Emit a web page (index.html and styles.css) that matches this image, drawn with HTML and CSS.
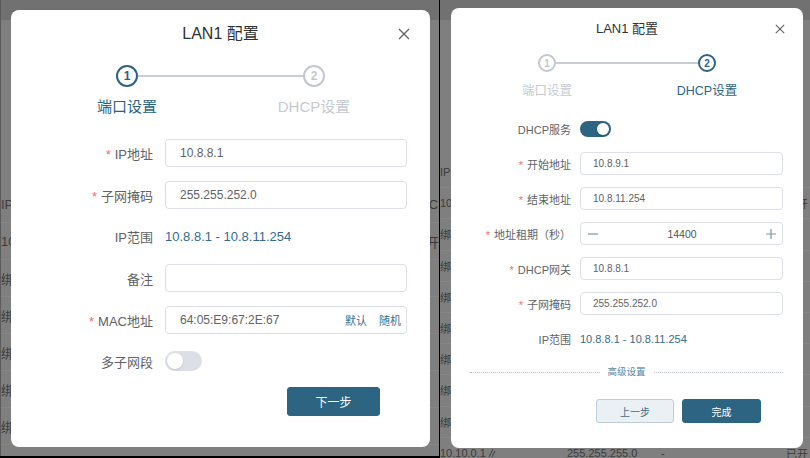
FILE: index.html
```html
<!DOCTYPE html>
<html lang="zh-CN">
<head>
<meta charset="utf-8">
<title>LAN1 配置</title>
<link rel="stylesheet" href="styles.css">
</head>
<body>
<div class="shot">
  <section class="pane pane-l">
    <div class="bg">
      <div class="topbar"></div>
      <div class="tbl tbl-l">
        <div class="tr th"><span class="c1 w-a">IP</span><span>DHC</span></div>
        <div class="tr"><span class="c1 w-b">10</span><span>开</span></div>
        <div class="tr"><span class="c1">绑</span></div>
        <div class="tr"><span class="c1">绑</span></div>
        <div class="tr"><span class="c1">绑</span></div>
        <div class="tr"><span class="c1">绑</span></div>
        <div class="tr"><span class="c1">绑</span></div>
      </div>
    </div>
    <div class="mask mask-l">
      <div class="dlg dlg-l">
        <div class="hd">LAN1 配置</div>
        <svg class="x" viewBox="0 0 12 12"><path d="M1 1L11 11M11 1L1 11"/></svg>
        <div class="track">
          <span class="dot on">1</span><span class="bar"></span><span class="dot">2</span>
        </div>
        <div class="steps"><span class="on">端口设置</span><span>DHCP设置</span></div>
        <div class="form">
          <div class="row"><span class="lbl"><i>*</i>IP地址</span><div class="inp">10.8.8.1</div></div>
          <div class="row"><span class="lbl"><i>*</i>子网掩码</span><div class="inp">255.255.252.0</div></div>
          <div class="row row-s"><span class="lbl">IP范围</span><span class="val">10.8.8.1 - 10.8.11.254</span></div>
          <div class="row"><span class="lbl">备注</span><div class="inp"></div></div>
          <div class="row"><span class="lbl"><i>*</i>MAC地址</span><div class="inp mac"><span>64:05:E9:67:2E:67</span><span class="sfx"><b>默认</b><b>随机</b></span></div></div>
          <div class="row row-t"><span class="lbl">多子网段</span><span class="sw"><span class="knob"></span></span></div>
        </div>
        <div class="act"><button class="btn pri">下一步</button></div>
      </div>
    </div>
  </section>

  <section class="pane pane-r">
    <div class="bg">
      <div class="topbar"></div>
      <div class="tbl tbl-r">
        <div class="tr th"><span class="c1 w-c">IP</span><span>DHC</span></div>
        <div class="tr"><span class="c1 w-d">10</span><span>开</span></div>
        <div class="tr"><span class="c1">绑</span></div>
        <div class="tr"><span class="c1">绑</span></div>
        <div class="tr"><span class="c1">绑</span></div>
        <div class="tr"><span class="c1">绑</span></div>
        <div class="tr"><span class="c1">绑</span></div>
        <div class="tr"><span class="c1">绑</span></div>
        <div class="tr"><span class="c1">绑</span></div>
        <div class="tr last"><span class="c1 w-e">10.10.0.1 <svg class="pen" viewBox="0 0 8 10"><path d="M1 9L5 1M4 9L7 3"/></svg></span><span class="w-f">255.255.255.0</span><span class="w-g">-</span><span>已开</span></div>
      </div>
    </div>
    <div class="mask mask-r">
      <div class="dlg dlg-r">
        <div class="hd">LAN1 配置</div>
        <svg class="x" viewBox="0 0 12 12"><path d="M1 1L11 11M11 1L1 11"/></svg>
        <div class="track">
          <span class="dot">1</span><span class="bar"></span><span class="dot on">2</span>
        </div>
        <div class="steps"><span>端口设置</span><span class="on">DHCP设置</span></div>
        <div class="form">
          <div class="row"><span class="lbl">DHCP服务</span><span class="sw on"><span class="knob"></span></span></div>
          <div class="row"><span class="lbl"><i>*</i>开始地址</span><div class="inp">10.8.9.1</div></div>
          <div class="row"><span class="lbl"><i>*</i>结束地址</span><div class="inp">10.8.11.254</div></div>
          <div class="row"><span class="lbl"><i>*</i>地址租期（秒）</span>
            <div class="inp num">
              <svg class="pm" viewBox="0 0 10 10"><path d="M0 5H10"/></svg>
              <span>14400</span>
              <svg class="pm" viewBox="0 0 10 10"><path d="M0 5H10M5 0V10"/></svg>
            </div>
          </div>
          <div class="row"><span class="lbl"><i>*</i>DHCP网关</span><div class="inp">10.8.8.1</div></div>
          <div class="row"><span class="lbl"><i>*</i>子网掩码</span><div class="inp">255.255.252.0</div></div>
          <div class="row"><span class="lbl">IP范围</span><span class="val">10.8.8.1 - 10.8.11.254</span></div>
        </div>
        <div class="divider"><span class="ln"></span><span class="dt">高级设置</span><span class="ln"></span></div>
        <div class="act"><button class="btn sec">上一步</button><button class="btn pri">完成</button></div>
      </div>
    </div>
  </section>
</div>
</body>
</html>
```

FILE: styles.css
```css
* { box-sizing: border-box; margin: 0; padding: 0; }
html, body { width: 810px; height: 458px; overflow: hidden; }
body {
  background: #000;
  font-family: "Liberation Sans", "Noto Sans CJK SC", sans-serif;
}
.shot { display: flex; gap: 1px; height: 458px; }
.pane { position: relative; overflow: hidden; background: #7f7f7f; }
.pane-l { width: 439px; height: 456px; border-left: 1px solid #5a5a5a; }
.pane-r { width: 370px; height: 458px; }

/* background (dimmed page) */
.topbar { height: 20px; background: #717171; }
.tbl { color: #3b3b3b; }
.tr { display: flex; align-items: center; border-bottom: 1px solid #868686; white-space: nowrap; }
.tbl-l { margin-top: 166px; font-size: 13px; }
.tbl-l .tr { height: 37px; }
.tbl-r { margin-top: 137px; font-size: 11px; }
.tbl-r .tr { height: 31.2px; }
.tr.last { border-bottom: 0; }
.c1 { flex: none; }
.w-a { width: 409px; }
.w-b { width: 425px; }
.w-c { width: 339px; }
.w-d { width: 357px; }
.w-e { width: 127px; display: flex; align-items: center; gap: 2px; }
.w-f { width: 94px; flex: none; }
.w-g { width: 125px; flex: none; }
.pen { width: 8px; height: 10px; fill: none; stroke: #3b3b3b; stroke-width: 1; }

/* modal */
.mask { position: absolute; inset: 0; display: flex; align-items: flex-start; }
.mask-l { padding: 10px 0 0 10px; }
.mask-r { padding: 8px 0 0 11px; }
.dlg { position: relative; background: #fff; border-radius: 8px; flex: none; }
.dlg-l { width: 419px; height: 437px; }
.dlg-r { width: 352px; height: 440px; }

.hd { text-align: center; color: #303133; }
.x { position: absolute; fill: none; stroke: #5f6266; stroke-width: 1.3; }

.track { display: flex; align-items: center; margin-left: auto; margin-right: auto; }
.dot {
  flex: none; border-radius: 50%; border: 2px solid #c3c7ce; color: #c3c7ce;
  display: flex; align-items: center; justify-content: center; font-weight: bold;
}
.dot.on { border-color: #2c6482; color: #2c6482; }
.bar { flex: 1; height: 2px; background: #c8ccd3; }
.steps { display: flex; justify-content: center; color: #c6cad1; }
.steps span { text-align: center; }
.steps .on { color: #2c6482; }

.row { display: flex; align-items: center; }
.lbl { flex: none; text-align: right; color: #606266; white-space: nowrap; }
.lbl i { font-style: normal; color: #f56c6c; margin-right: 4px; }
.inp {
  flex: none; border: 1px solid #dcdfe6; border-radius: 4px; color: #606266;
  display: flex; align-items: center;
}
.val { color: #356b8c; }
.sw { flex: none; position: relative; border-radius: 20px; background: #dcdfe6; display: flex; align-items: center; }
.sw .knob { background: #fff; border-radius: 50%; box-shadow: 0 1px 2px rgba(0,0,0,0.12); }
.sw.on { background: #2c6482; justify-content: flex-end; }

.act { display: flex; justify-content: flex-end; }
.btn { font-family: inherit; border-radius: 3px; cursor: pointer; }
.btn.pri { background: #2c6482; border: 1px solid #2c6482; color: #fff; }
.btn.sec { background: #ebf0f4; border: 1px solid #bfcdd8; color: #3e6a86; }

/* left dialog */
.dlg-l .hd { padding-top: 14px; font-size: 16px; line-height: 20px; }
.dlg-l .x { top: 18px; right: 20px; width: 12px; height: 12px; }
.dlg-l .track { width: 209px; margin-top: 21px; }
.dlg-l .dot { width: 22px; height: 22px; font-size: 12px; }
.dlg-l .steps { gap: 67px; margin-top: 10px; font-size: 15px; line-height: 20px; }
.dlg-l .steps span { width: 120px; }
.dlg-l .form { margin-top: 22px; display: flex; flex-direction: column; gap: 14px; }
.dlg-l .row { height: 28px; }
.dlg-l .row-s { height: 27px; }
.dlg-l .row-t { margin-top: -1px; }
.dlg-l .lbl { width: 154px; padding-right: 12px; font-size: 13px; }
.dlg-l .inp { width: 242px; height: 28px; padding: 0 14px; font-size: 12px; }
.dlg-l .val { font-size: 13px; }
.dlg-l .mac { justify-content: space-between; padding-right: 5px; }
.dlg-l .sfx { display: flex; gap: 12px; }
.dlg-l .sfx b { font-weight: normal; font-size: 11px; color: #3b6f8f; }
.dlg-l .sw { width: 37px; height: 20px; padding: 2px; }
.dlg-l .sw .knob { width: 16px; height: 16px; }
.dlg-l .act { margin-top: 12px; padding-right: 50px; }
.dlg-l .btn { width: 93px; height: 29px; font-size: 12px; }

/* right dialog */
.dlg-r .hd { padding-top: 12px; font-size: 13px; line-height: 18px; }
.dlg-r .x { top: 16px; right: 18px; width: 10px; height: 10px; }
.dlg-r .track { width: 178px; margin-top: 16px; }
.dlg-r .dot { width: 18px; height: 18px; font-size: 10px; }
.dlg-r .steps { gap: 60px; margin-top: 11px; font-size: 12.5px; line-height: 16px; }
.dlg-r .steps span { width: 100px; }
.dlg-r .form { margin-top: 18px; display: flex; flex-direction: column; gap: 12px; }
.dlg-r .row { height: 23px; }
.dlg-r .lbl { width: 129px; padding-right: 9px; font-size: 11px; }
.dlg-r .inp { width: 203px; height: 23px; padding: 0 12px; font-size: 10px; }
.dlg-r .num { justify-content: space-between; padding: 0 6px 0 7px; font-size: 10.5px; color: #505356; }
.dlg-r .pm { width: 10px; height: 10px; fill: none; stroke: #7b98ad; stroke-width: 1.2; }
.dlg-r .val { font-size: 11px; }
.dlg-r .sw { width: 31px; height: 16px; padding: 2px; }
.dlg-r .sw .knob { width: 12px; height: 12px; }
.dlg-r .divider { display: flex; align-items: center; gap: 8px; margin: 16px 20px 0 19px; height: 12px; }
.dlg-r .ln { flex: 1; border-top: 1px dotted #b9bec6; }
.dlg-r .dt { font-size: 9.5px; color: #5a87a3; line-height: 12px; }
.dlg-r .act { margin-top: 21px; padding-right: 42px; gap: 8px; }
.dlg-r .btn { height: 24px; font-size: 10px; }
.dlg-r .btn.sec { width: 78px; }
.dlg-r .btn.pri { width: 79px; }
```
